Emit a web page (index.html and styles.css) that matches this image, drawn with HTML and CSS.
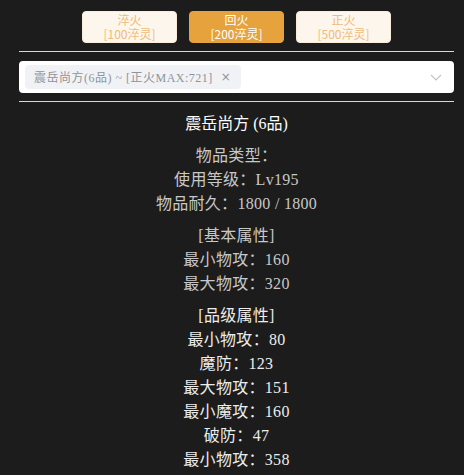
FILE: index.html
```html
<!DOCTYPE html>
<html lang="zh">
<head>
<meta charset="utf-8">
<link rel="stylesheet" href="styles.css">
</head>
<body>
<div class="page">
  <div class="btns">
    <div class="btn plain"><span class="lbl">淬火<br>[100淬灵]</span></div>
    <div class="btn active"><span class="lbl">回火<br>[200淬灵]</span></div>
    <div class="btn plain"><span class="lbl">正火<br>[500淬灵]</span></div>
  </div>
  <div class="rule"></div>
  <div class="select">
    <div class="tag"><span class="tag-text">震岳尚方(6品) ~ [正火MAX:721]</span><span class="tag-close">×</span></div>
    <svg class="chev" width="12" height="7" viewBox="0 0 12 7"><path d="M1 1 L6 6 L11 1" fill="none" stroke="#c0c4cc" stroke-width="1.2"/></svg>
  </div>
  <div class="rule rule2"></div>
  <div class="info">
    <div class="title">震岳尚方 (6品)</div>
    <div class="group dim">
      <div class="line">物品类型：</div>
      <div class="line">使用等级：Lv195</div>
      <div class="line">物品耐久：1800 / 1800</div>
    </div>
    <div class="group dim">
      <div class="line">[基本属性]</div>
      <div class="line">最小物攻：160</div>
      <div class="line">最大物攻：320</div>
    </div>
    <div class="group bright">
      <div class="line">[品级属性]</div>
      <div class="line">最小物攻：80</div>
      <div class="line">魔防：123</div>
      <div class="line">最大物攻：151</div>
      <div class="line">最小魔攻：160</div>
      <div class="line">破防：47</div>
      <div class="line">最小物攻：358</div>
    </div>
  </div>
</div>
</body>
</html>
```

FILE: styles.css
```css
html, body {
  margin: 0;
  background: #1c1c1c;
}
body {
  font-family: "Liberation Serif", "Noto Sans CJK SC", serif;
  height: 475px;
  overflow: hidden;
}
.page {
  padding: 11px 10px 0 19px;
}
.btns {
  display: flex;
  justify-content: center;
  gap: 12px;
}
.btn {
  box-sizing: border-box;
  width: 95px;
  height: 32px;
  border-radius: 4px;
  border: 1px solid transparent;
  display: flex;
  align-items: center;
  justify-content: center;
  text-align: center;
  font-family: "Noto Sans CJK SC", sans-serif;
  font-size: 12px;
  line-height: 14px;
}
.btn.plain {
  background: #fdf6ec;
  border-color: #faecd8;
  color: #eebb7a;
}
.btn.active {
  background: #e6a23c;
  border-color: #e6a23c;
  color: #ffffff;
}
.rule {
  height: 1px;
  background: #d8d8d8;
  margin-top: 8px;
}
.select {
  box-sizing: border-box;
  margin-top: 9px;
  height: 32px;
  background: #ffffff;
  border-radius: 4px;
  display: flex;
  align-items: center;
  padding: 0 12px 0 6px;
}
.tag {
  height: 24px;
  box-sizing: border-box;
  background: #f0f2f5;
  border-radius: 4px;
  color: #909399;
  font-size: 12px;
  display: flex;
  align-items: center;
  padding: 0 10px 0 9px;
  gap: 8px;
}
.tag-text {
  letter-spacing: 0.5px;
}
.tag-close {
  font-family: "DejaVu Sans", sans-serif;
  font-size: 12px;
  color: #909399;
}
.chev {
  margin-left: auto;
}
.rule2 {
  margin-top: 8px;
}
.info {
  text-align: center;
  font-size: 16px;
  line-height: 24px;
  padding-top: 10px;
}
.title {
  color: #ffffff;
  margin-bottom: 8px;
}
.line {
  letter-spacing: 0.3px;
}
.group + .group {
  margin-top: 8px;
}
.dim {
  color: #c8c8c8;
}
.bright {
  color: #ececec;
}
```
